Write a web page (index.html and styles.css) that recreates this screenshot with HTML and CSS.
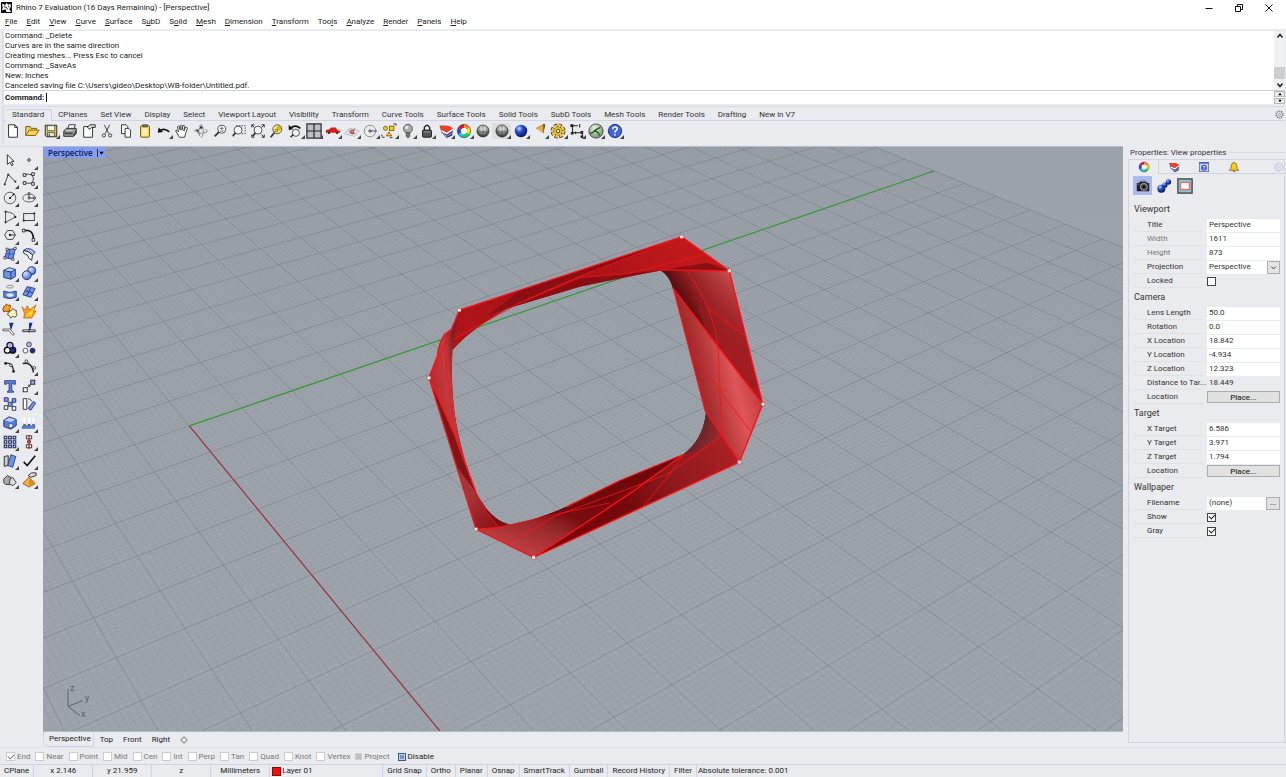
FILE: index.html
```html
<!DOCTYPE html>
<html lang="en">
<head>
<meta charset="utf-8">
<title>Rhino 7 Evaluation (16 Days Remaining) - [Perspective]</title>
<link rel="stylesheet" href="styles.css">
</head>
<body>
<svg class="defs" width="0" height="0" aria-hidden="true">
  <defs>
    <radialGradient id="ballGray" cx=".5" cy=".3" r=".7"><stop offset="0" stop-color="#fff"/><stop offset=".5" stop-color="#999"/><stop offset="1" stop-color="#222"/></radialGradient>
    <radialGradient id="ballBlue" cx=".35" cy=".3" r=".7"><stop offset="0" stop-color="#cfe0ff"/><stop offset=".4" stop-color="#2a50d8"/><stop offset="1" stop-color="#0a1560"/></radialGradient>
    <radialGradient id="ballSoft" cx=".35" cy=".3" r=".7"><stop offset="0" stop-color="#d5e2ff"/><stop offset="1" stop-color="#4a70dc"/></radialGradient>
    <radialGradient id="ballGreen" cx=".4" cy=".3" r=".7"><stop offset="0" stop-color="#e8f5e4"/><stop offset="1" stop-color="#6d9c68"/></radialGradient>
    <symbol id="wheel" viewBox="0 0 18 18">
      <circle cx="9" cy="9" r="5.500" fill="#fff"/>
      <g fill="none" stroke-width="3.800">
        <path d="M9 3.500A5.500 5.500 0 0 1 13.800 6.300" stroke="#ff8a10"/><path d="M13.800 6.300A5.500 5.500 0 0 1 13.800 11.700" stroke="#f5e000"/><path d="M13.800 11.700A5.500 5.500 0 0 1 9 14.500" stroke="#20d040"/><path d="M9 14.500A5.500 5.500 0 0 1 4.200 11.700" stroke="#10c8e8"/><path d="M4.200 11.700A5.500 5.500 0 0 1 4.200 6.300" stroke="#3040e0"/><path d="M4.200 6.300A5.500 5.500 0 0 1 9 3.500" stroke="#e01030"/>
      </g><circle cx="9" cy="9" r="7.500" fill="none" stroke="#333" stroke-width=".7"/>
    </symbol>
    <symbol id="wedge" viewBox="0 0 18 18"><path d="M2 3L4 11L10 17L16 14L17 6L9 3Z" fill="#333c70"/><path d="M2 3L12 3L17 6L10 11L4 8Z" fill="#ef4023"/><path d="M4 8L10 11L17 6V8L10 13L4 10Z" fill="#fff"/><path d="M5 12L10 15L16 11" fill="none" stroke="#aab4dc"/></symbol>
    <symbol id="gear" viewBox="0 0 18 18"><circle cx="9" cy="9" r="7" fill="none" stroke="currentColor" stroke-width="2.500" stroke-dasharray="3 1.400"/><circle cx="9" cy="9" r="5.500" fill="none" stroke="currentColor"/><circle cx="9" cy="9" r="2" fill="none" stroke="currentColor" stroke-width="1.500"/></symbol>
  </defs>
</svg>

<header class="titlebar">
  <svg class="logo" viewBox="0 0 12 12"><rect width="12" height="12" fill="#111"/><path d="M1 3L3 2L4 4L6 1L8 3L10 2L11 5L9 8L11 11H6L5 8L1 9L2 6Z" fill="#fff"/><path d="M3 5L6 6L7 8M8 4L9 6" fill="none" stroke="#111"/></svg>
  <h1>Rhino 7 Evaluation (16 Days Remaining) - [Perspective]</h1>
  <div class="window-buttons">
    <button aria-label="Minimize"><svg viewBox="0 0 10 10"><path d="M1.500 5.500H8.500"/></svg></button>
    <button aria-label="Restore"><svg viewBox="0 0 10 10"><path d="M1.500 3.500H6.500V8.500H1.500ZM3.500 3V1.500H8.500V6.500H7"/></svg></button>
    <button aria-label="Close"><svg viewBox="0 0 10 10"><path d="M1.500 1.500L8.500 8.500M8.500 1.500L1.500 8.500"/></svg></button>
  </div>
</header>
<nav class="menubar">
  <button><u>F</u>ile</button><button><u>E</u>dit</button><button><u>V</u>iew</button><button><u>C</u>urve</button><button><u>S</u>urface</button><button>S<u>u</u>bD</button><button>S<u>o</u>lid</button><button><u>M</u>esh</button><button><u>D</u>imension</button><button><u>T</u>ransform</button><button>Too<u>l</u>s</button><button><u>A</u>nalyze</button><button><u>R</u>ender</button><button><u>P</u>anels</button><button><u>H</u>elp</button>
</nav>

<section class="command">
  <div class="history">
    <div class="log">
      <p>Command: _Delete</p><p>Curves are in the same direction</p><p>Creating meshes... Press Esc to cancel</p><p>Command: _SaveAs</p><p>New: Inches</p><p>Canceled saving file C:\Users\gideo\Desktop\WB-folder\Untitled.pdf.</p>
    </div>
    <div class="scroll">
      <button aria-label="Scroll up"><svg viewBox="0 0 8 8"><path d="M1.500 5.500L4 2.500L6.500 5.500"/></svg></button>
      <span class="thumb"></span>
      <button aria-label="Scroll down"><svg viewBox="0 0 8 8"><path d="M1.500 2.500L4 5.500L6.500 2.500"/></svg></button>
    </div>
  </div>
  <div class="prompt">
    <label for="cmd">Command:</label><span class="caret"></span><input id="cmd" type="text">
    <div class="spin">
      <button aria-label="Previous"><svg viewBox="0 0 8 5"><path d="M2 4L4 1L6 4Z"/></svg></button>
      <button aria-label="Next"><svg viewBox="0 0 8 5"><path d="M2 1L4 4L6 1Z"/></svg></button>
    </div>
  </div>
</section>

<section class="ribbon">
  <div class="ribbon-tabs">
    <button class="on">Standard</button><button>CPlanes</button><button>Set View</button><button>Display</button><button>Select</button><button>Viewport Layout</button><button>Visibility</button><button>Transform</button><button>Curve Tools</button><button>Surface Tools</button><button>Solid Tools</button><button>SubD Tools</button><button>Mesh Tools</button><button>Render Tools</button><button>Drafting</button><button>New in V7</button>
    <button class="gear" aria-label="Toolbar options"><svg><use href="#gear"/></svg></button>
  </div>
  <div class="tools-top">
    <button aria-label="New"><svg viewBox="0 0 18 18"><path d="M4 2H11L14 5V16H4Z" fill="#fff" stroke="#222"/><path d="M11 2V5H14" fill="none" stroke="#222"/></svg></button>
    <button aria-label="Open"><svg viewBox="0 0 18 18"><path d="M2 14V4H7L8 6H14V9" fill="#f7cf55" stroke="#6b5213"/><path d="M2 14L6 8H17L13 14Z" fill="#ffd34d" stroke="#6b5213"/></svg></button>
    <button class="more" aria-label="Save"><svg viewBox="0 0 18 18"><path d="M2.500 2.500H15.500V15.500H4L2.500 14Z" fill="#c9b950" stroke="#222"/><path d="M5 3H13V8.500H5Z" fill="#f6f6f0" stroke="#333" stroke-width=".6"/><path d="M5 11H13V15H5Z" fill="#f0f0f0" stroke="#222" stroke-width=".7"/><path d="M7 12V15" stroke="#222"/></svg></button>
    <button aria-label="Print"><svg viewBox="0 0 18 18"><path d="M6 7L8 2H15L13 8" fill="#fff" stroke="#222"/><path d="M2 9L5 6H16V12L13 15H2Z" fill="#999" stroke="#222"/><path d="M3 10H12M3 12H12M13 14L16 9" stroke="#222"/><path d="M4 9H12" stroke="#fff"/></svg></button>
    <button aria-label="Document properties"><svg viewBox="0 0 18 18"><path d="M3 4H13V16H3Z" fill="#fff" stroke="#222"/><path d="M7 5L10 2H16V5H12L10 7Z" fill="#ddd" stroke="#222"/></svg></button>
    <button aria-label="Cut"><svg viewBox="0 0 18 18"><path d="M6 2L11 12M12 2L7 12" stroke="#333" fill="none"/><circle cx="5.500" cy="14" r="1.800" fill="none" stroke="#333"/><circle cx="12.500" cy="14" r="1.800" fill="none" stroke="#333"/></svg></button>
    <button aria-label="Copy"><svg viewBox="0 0 18 18"><path d="M4 2H9L11 4V12H4Z" fill="#fff" stroke="#222"/><path d="M8 6H12L14 8V16H8Z" fill="#fff" stroke="#222"/></svg></button>
    <button aria-label="Paste"><svg viewBox="0 0 18 18"><rect x="4" y="3" width="10" height="13" rx="1" fill="#f5d95e" stroke="#6b5213"/><rect x="6" y="5" width="6" height="9" fill="#fff3a5"/><rect x="6.500" y="2" width="5" height="2.500" fill="#777" stroke="#222" stroke-width=".6"/></svg></button>
    <button class="more" aria-label="Undo"><svg viewBox="0 0 18 18"><path d="M4 9Q9 5 15 10" fill="none" stroke="#111" stroke-width="2"/><path d="M2 11L3 5L8 10Z" fill="#111"/></svg></button>
    <button aria-label="Pan"><svg viewBox="0 0 18 18"><path d="M6 16L2 9Q2 7 4 9L5 10L4 4Q5 3 6 4L7 8V3Q8 1 9 3V8L10 3Q12 2 12 4L11 9L13 5Q15 4 15 6L13 12L12 16Z" fill="#fff" stroke="#333"/></svg></button>
    <button aria-label="Rotate view"><svg viewBox="0 0 18 18"><ellipse cx="9" cy="9" rx="7" ry="2.500" fill="none" stroke="#777" stroke-dasharray="5 2"/><ellipse cx="9" cy="9" rx="2.500" ry="7" fill="none" stroke="#777" stroke-dasharray="8 2"/><path d="M7 6L9 3L11 6ZM6 10L3 9L6 7Z" fill="#222"/></svg></button>
    <button aria-label="Zoom dynamic"><svg viewBox="0 0 18 18"><circle cx="11" cy="7" r="4.500" fill="#f5f6f8" stroke="#444"/><path d="M8 10L3 15" stroke="#333" stroke-width="2"/><path d="M9 6H13M11 4V8M9 9H13" stroke="#444" stroke-width=".8"/></svg></button>
    <button aria-label="Zoom window"><svg viewBox="0 0 18 18"><path d="M6 3H16V12H12" fill="none" stroke="#333" stroke-dasharray="1.500 1.500"/><circle cx="8" cy="8" r="4.500" fill="#f5f6f8" stroke="#444"/><path d="M5 11L2 15" stroke="#333" stroke-width="2"/></svg></button>
    <button aria-label="Zoom extents"><svg viewBox="0 0 18 18"><circle cx="9" cy="8" r="4.500" fill="#f5f6f8" stroke="#444"/><path d="M6 11L3 15" stroke="#333" stroke-width="2"/><path d="M2 5V2H5M13 2H16V5M16 13V16H13M5 16H2V13M13 5L16 2M13 13L16 16M2 2L5 5" fill="none" stroke="#222"/></svg></button>
    <button aria-label="Zoom selected"><svg viewBox="0 0 18 18"><circle cx="10.500" cy="7" r="5" fill="#f8ea7a" stroke="#444"/><path d="M7 11L3 16" stroke="#333" stroke-width="2"/><circle cx="12" cy="6" r="2" fill="#f2c400" stroke="#7a6200" stroke-width=".5"/><rect x="8" y="7" width="3" height="3" fill="#f2c400" stroke="#7a6200" stroke-width=".5"/></svg></button>
    <button class="more" aria-label="Undo view"><svg viewBox="0 0 18 18"><circle cx="10" cy="11" r="4" fill="#f5f6f8" stroke="#444"/><path d="M7 13L4 16" stroke="#333" stroke-width="1.800"/><path d="M4 6Q9 1 15 6" fill="none" stroke="#111" stroke-width="1.800"/><path d="M2 8V2L7 7Z" fill="#111"/></svg></button>
    <button class="more" aria-label="Four viewports"><svg viewBox="0 0 18 18"><rect x="1" y="1" width="16" height="16" fill="#bcc0c6" stroke="#222" stroke-width="1.300"/><path d="M9 1V17M1 9H17" stroke="#222" stroke-width="1.300"/></svg></button>
    <button class="more" aria-label="Named view"><svg viewBox="0 0 18 18"><path d="M1 8L5 7L7 5H12L14 8L17 9V11H1Z" fill="#e01818"/><circle cx="4.500" cy="11" r="1.500" fill="#333"/><circle cx="13.500" cy="11" r="1.500" fill="#333"/></svg></button>
    <button class="more" aria-label="CPlane"><svg viewBox="0 0 18 18"><path d="M1 12L6 6L17 9L12 15ZM4 8L14 12M8 6.500L5 13M12 7.500L9 14" fill="none" stroke="#aaa" stroke-width=".8"/><path d="M8 11L12 6M8 11L12 12" stroke="#555"/><circle cx="9" cy="10" r="2" fill="none" stroke="#c33"/></svg></button>
    <button class="more" aria-label="Osnap"><svg viewBox="0 0 18 18"><circle cx="9" cy="9" r="6.500" fill="none" stroke="#888"/><path d="M9 9H17" stroke="#444"/><circle cx="9" cy="9" r="1.300" fill="#fff" stroke="#222"/></svg></button>
    <button class="more" aria-label="Select"><svg viewBox="0 0 18 18"><circle cx="5" cy="6" r="2.300" fill="#f7d01a" stroke="#7a6200"/><rect x="9.500" y="3.500" width="5" height="5" fill="#f7d01a" stroke="#7a6200"/><path d="M6 14.500L9 10L12 14.500Z" fill="#f7d01a" stroke="#c04000"/><path d="M14 1H17V3M1 15V13M1 16H4M10 16.500H13" stroke="#222" fill="none"/></svg></button>
    <button class="more" aria-label="Hide"><svg viewBox="0 0 18 18"><circle cx="9" cy="6.500" r="5" fill="#aaa" stroke="#555"/><path d="M7 11H11V15L9 17L7 15Z" fill="#777" stroke="#333" stroke-width=".7"/><circle cx="7.500" cy="5" r="1.800" fill="#eee"/></svg></button>
    <button class="more" aria-label="Lock"><svg viewBox="0 0 18 18"><path d="M6 9V5Q9 0 12 5V9" fill="none" stroke="#222" stroke-width="1.500"/><rect x="4" y="8" width="10" height="8" rx="1" fill="#555" stroke="#111"/><path d="M5 10H13" stroke="#aaa"/></svg></button>
    <button class="more" aria-label="Layers"><svg viewBox="0 0 18 18"><use href="#wedge"/></svg></button>
    <button class="more" aria-label="Properties"><svg viewBox="0 0 18 18"><use href="#wheel"/></svg></button>
    <button aria-label="Shade"><svg viewBox="0 0 18 18"><circle cx="9" cy="9" r="6.800" fill="url(#ballGray)" stroke="#222" stroke-width=".7"/><path d="M9 3V15M3 10H15" stroke="#333" stroke-width=".6"/></svg></button>
    <button class="more pressed" aria-label="Shaded view"><svg viewBox="0 0 18 18"><circle cx="9" cy="9" r="6.800" fill="url(#ballGray)" stroke="#222" stroke-width=".7"/><path d="M9 3V15M3 10H15" stroke="#333" stroke-width=".6"/></svg></button>
    <button class="more" aria-label="Render"><svg viewBox="0 0 18 18"><circle cx="9" cy="9" r="7" fill="url(#ballBlue)"/></svg></button>
    <button class="more" aria-label="Spotlight"><svg viewBox="0 0 18 18"><path d="M6 6L15 1L14 11Z" fill="#f6a633" stroke="#8a5a10" stroke-width=".6"/><path d="M14 1L16 2L14 11Z" fill="#444"/><path d="M6 6L9 7L14 11Z" fill="#ffe9a8"/></svg></button>
    <button class="more" aria-label="Options"><svg viewBox="0 0 18 18"><circle cx="9" cy="9" r="5" fill="#f0c23a" stroke="#4a3800" stroke-width=".7"/><circle cx="9" cy="9" r="6.500" fill="none" stroke="#4a3800" stroke-width="3.800" stroke-dasharray="3.500 1.600"/><circle cx="9" cy="9" r="6" fill="none" stroke="#f7cf4a" stroke-width="3" stroke-dasharray="2.600 2.110"/><circle cx="9" cy="9" r="2" fill="#fff" stroke="#4a3800"/></svg></button>
    <button class="more" aria-label="Dimension"><svg viewBox="0 0 18 18"><path d="M4 3H10M4 3V11H15V15M12 1V5" fill="none" stroke="#222" stroke-width="1.200"/><path d="M1.500 1.500H5V4.500H1.500ZM2 10H5V13H2ZM13 14H16V17H13ZM13 9H16V12H13ZM6 11L8 9V13Z" fill="#222"/></svg></button>
    <button class="more" aria-label="Grasshopper"><svg viewBox="0 0 18 18"><circle cx="9" cy="9" r="8" fill="url(#ballGreen)" stroke="#333" stroke-width=".9"/><path d="M2 12Q6 11 8 8L14 5M7 9Q11 9 13 14" stroke="#30502c" fill="none" stroke-width="1.500"/></svg></button>
    <button class="more" aria-label="Help"><svg viewBox="0 0 18 18"><circle cx="9" cy="9" r="7.500" fill="#3f62dd" stroke="#1c2d80"/><path d="M6.500 7Q6.500 4.500 9 4.500Q11.500 4.500 11.500 6.800Q11.500 8 9 9.500V11M9 12.500V14" fill="none" stroke="#fff" stroke-width="1.700"/></svg></button>
  </div>
</section>

<main class="work">
  <aside class="tools-side">
    <button aria-label="Pointer"><svg viewBox="0 0 18 18"><path d="M6 3V14L9 11.500L11 15.500L12.500 14.500L10.500 10.500H13.500Z" fill="#fff" stroke="#222"/></svg></button>
    <button class="more" aria-label="Point"><svg viewBox="0 0 18 18"><circle cx="9" cy="9" r="1.500" fill="#fff" stroke="#222"/></svg></button>
    <button class="more" aria-label="Polyline"><svg viewBox="0 0 18 18"><path d="M3 15L7 4L15 12" fill="none" stroke="#333"/><path d="M2 14H4V16H2ZM6 3H8V5H6ZM14 11H16V13H14Z" fill="#222"/></svg></button>
    <button class="more" aria-label="Curve"><svg viewBox="0 0 18 18"><path d="M4 4Q14 2 14 9Q14 16 4 13" fill="none" stroke="#333"/><path d="M2.500 3H5.500V6H2.500ZM12 2H15V5H12ZM2.500 12H5.500V15H2.500ZM12 13H15V16H12Z" fill="#fff" stroke="#222"/></svg></button>
    <button class="more" aria-label="Circle"><svg viewBox="0 0 18 18"><circle cx="9" cy="9" r="6.500" fill="none" stroke="#555"/><path d="M9 9L13 5" stroke="#333"/><path d="M8 8H10V10H8ZM12 4H14V6H12Z" fill="#222"/></svg></button>
    <button class="more" aria-label="Ellipse"><svg viewBox="0 0 18 18"><ellipse cx="9" cy="9" rx="7" ry="4.500" fill="none" stroke="#555"/><path d="M9 9V4M9 9H15" stroke="#333"/><path d="M8 3H10V5H8ZM8 8H10V10H8ZM14 8H16V10H14Z" fill="#fff" stroke="#222" stroke-width=".8"/></svg></button>
    <button class="more" aria-label="Arc"><svg viewBox="0 0 18 18"><path d="M4 3Q14 4 15 9L4 15Z" fill="none" stroke="#444"/><path d="M3 2H5V4H3ZM14 8H16V10H14ZM3 14H5V16H3Z" fill="#222"/></svg></button>
    <button class="more" aria-label="Rectangle"><svg viewBox="0 0 18 18"><rect x="3" y="5" width="12" height="8" fill="none" stroke="#333"/><path d="M14 4H16V6H14ZM2 12H4V14H2Z" fill="#222"/></svg></button>
    <button class="more" aria-label="Polygon"><svg viewBox="0 0 18 18"><path d="M6 4H12L15 9L12 14H6L3 9Z" fill="none" stroke="#333"/><path d="M9 9H15" stroke="#333"/><circle cx="9" cy="9" r="1.300" fill="#222"/></svg></button>
    <button class="more" aria-label="Fillet"><svg viewBox="0 0 18 18"><path d="M3 4H8Q14 5 14 14" fill="none" stroke="#111" stroke-width="1.800"/><path d="M1.500 2.500H4.500V5.500H1.500ZM12.500 13H15.500V16H12.500Z" fill="#fff" stroke="#222"/></svg></button>
    <button class="more" aria-label="Surface from points"><svg viewBox="0 0 18 18"><path d="M6 4L15 3L12 15L3 13Z" fill="#6f92e8" stroke="#223a80"/><path d="M9 4L7 14M5 9L14 9" stroke="#223a80" stroke-width=".7"/><path d="M4.500 2.500H7V5H4.500ZM13.500 1.500H16V4H13.500ZM2 12H4.500V14.500H2ZM11 13.500H13.500V16H11Z" fill="#fff" stroke="#222" stroke-width=".8"/></svg></button>
    <button class="more" aria-label="Surface sweep"><svg viewBox="0 0 18 18"><path d="M3 5L6 3Q12 2 16 7L13 10Q9 6 3 5Z" fill="#a9bdf4" stroke="#223a80"/><path d="M3 5Q9 6 13 10L12 16L9 14Q9 10 3 8Z" fill="#fff" stroke="#222"/></svg></button>
    <button class="more" aria-label="Box"><svg viewBox="0 0 18 18"><path d="M2 6L8 3L15 5V13L10 16L2 14Z" fill="#6f92e8" stroke="#1d2f6d"/><path d="M2 6L10 8L15 5M10 8V16" fill="none" stroke="#1d2f6d"/><path d="M3 6L8 4L14 5L10 7Z" fill="#c5d4fa"/></svg></button>
    <button class="more" aria-label="Boolean union"><svg viewBox="0 0 18 18"><circle cx="12" cy="6.500" r="4.500" fill="url(#ballSoft)" stroke="#1d2f6d"/><circle cx="6.500" cy="11.500" r="5" fill="url(#ballSoft)" stroke="#1d2f6d"/></svg></button>
    <button class="more" aria-label="Project to surface"><svg viewBox="0 0 18 18"><ellipse cx="9" cy="3" rx="4" ry="1.600" fill="none" stroke="#888"/><path d="M2 8Q9 11 16 8V15Q9 18 2 15Z" fill="#5c84e6" stroke="#223a80"/><ellipse cx="9" cy="12.500" rx="4" ry="2" fill="#e3ebff"/></svg></button>
    <button class="more" aria-label="Mesh"><svg viewBox="0 0 18 18"><path d="M7 3L16 5L11 15L2 12Z" fill="#6f92e8" stroke="#223a80"/><path d="M4.500 7.500L13.500 10M11 4L6.500 13.500" stroke="#223a80"/></svg></button>
    <button aria-label="Join"><svg viewBox="0 0 18 18"><path d="M2 4L4 3L5 1L7 3L9 2L10 5L8 7L9 9L6 10L4 9L2 10L1 7Z" fill="#ffa21a" stroke="#6b4200"/><path d="M9 9L11 8L12 6L14 8L16 8V11L17 13L15 16L12 15L10 17L8 14L6 13Z" fill="#fff3b8" stroke="#444"/></svg></button>
    <button aria-label="Explode"><svg viewBox="0 0 18 18"><path d="M1 4L5 8L7 3L10 8L17 2L14 9L17 9L12 17L3 17L4 12Z" fill="#ff9c12" stroke="#a85a00" stroke-width=".7"/><path d="M5 16L8 11L15 5L12 14Z" fill="#ffd23c"/></svg></button>
    <button aria-label="Trim"><svg viewBox="0 0 18 18"><path d="M8 2H13L10 11Z" fill="#16329c"/><path d="M1 9H9L14 15L12 16L8 11H1Z" fill="#fff" stroke="#333" stroke-width=".8"/></svg></button>
    <button aria-label="Split"><svg viewBox="0 0 18 18"><path d="M9 2H13L10 11H9Z" fill="#16329c"/><path d="M2 10H16V12H2Z" fill="#fff" stroke="#222"/><path d="M9 9V13" stroke="#222"/></svg></button>
    <button class="more" aria-label="Group"><svg viewBox="0 0 18 18"><g stroke="#111" stroke-width="2.200"><circle cx="9" cy="6" r="3"/><circle cx="6" cy="11.500" r="3"/><circle cx="12" cy="11.500" r="3"/></g><circle cx="9" cy="6" r="2.700" fill="#aeb8f4"/><circle cx="6" cy="11.500" r="2.500" fill="#fff"/><circle cx="12" cy="11.500" r="2.500" fill="#1c2a9c"/></svg></button>
    <button aria-label="Ungroup"><svg viewBox="0 0 18 18"><circle cx="9" cy="5" r="2.700" fill="#aeb8f4" stroke="#444"/><circle cx="5" cy="12" r="2.700" fill="#fff" stroke="#444"/><circle cx="13" cy="12" r="2.700" fill="#1c2a9c" stroke="#222"/></svg></button>
    <button aria-label="Edit points"><svg viewBox="0 0 18 18"><path d="M3 5Q12 3 13 14" fill="none" stroke="#222" stroke-width="1.400"/><circle cx="4" cy="5" r="1.500" fill="#222"/><circle cx="10" cy="7" r="1.500" fill="#fff" stroke="#222"/><circle cx="13" cy="14" r="1.500" fill="#222"/></svg></button>
    <button class="more" aria-label="Control points"><svg viewBox="0 0 18 18"><path d="M2 5Q12 3 14 15" fill="none" stroke="#222" stroke-width="1.600"/><path d="M6 2L15 10" stroke="#777"/><circle cx="6" cy="2.500" r="1.500" fill="#fff" stroke="#333"/><circle cx="15" cy="10" r="1.500" fill="#fff" stroke="#333"/></svg></button>
    <button aria-label="Text"><svg viewBox="0 0 18 18"><path d="M3 3H15V7H13L12 6H11V14L13 15V16H6V15L8 14V6H6L5 7H3Z" fill="#5c84ea" stroke="#1d2f6d" stroke-width=".9"/></svg></button>
    <button class="more" aria-label="Move"><svg viewBox="0 0 18 18"><rect x="2.500" y="11" width="4.500" height="4.500" fill="#fff" stroke="#222"/><rect x="11" y="2.500" width="4.500" height="4.500" fill="#8faaf0" stroke="#222"/><path d="M7 11L11 7M8 8H10V10" stroke="#222" fill="none"/></svg></button>
    <button aria-label="Copy objects"><svg viewBox="0 0 18 18"><path d="M2.500 11H6.500V15H2.500ZM11.500 12H15.500V16H11.500Z" fill="#fff" stroke="#222"/><path d="M7 7H11.500V11.500H7ZM11.500 3H15.500V7H11.500ZM2.500 2H7V6H2.500Z" fill="#7e9cf0" stroke="#1d2f6d"/></svg></button>
    <button aria-label="Rotate"><svg viewBox="0 0 18 18"><path d="M2.500 3H6.500V15H2.500Z" fill="#fff" stroke="#222"/><path d="M8 14L14 6L16.500 8L11 16Z" fill="#6f92e8" stroke="#223a80"/><path d="M8 3Q11 3 12 6" fill="none" stroke="#222"/></svg></button>
    <button class="more" aria-label="Cage"><svg viewBox="0 0 18 18"><path d="M2 6L8 2L16 5V12L10 16L2 13Z" fill="#4e7de6" stroke="#1d2f6d"/><path d="M3 6L8 3L15 5L10 8Z" fill="#c5d4fa"/><path d="M8 10H12V14H8Z" fill="#fff" stroke="#1d2f6d" stroke-width=".6"/></svg></button>
    <button class="more" aria-label="Flow"><svg viewBox="0 0 18 18"><path d="M4 3V11M9 3V11M14 3V11" stroke="#fff" stroke-width="2"/><path d="M3 10L4 12L5 10M8 10L9 12L10 10M13 10L14 12L15 10" stroke="#222" fill="none"/><path d="M2 12H16L15 15H1Z" fill="#5c84e6" stroke="#223a80" stroke-width=".6"/></svg></button>
    <button class="more" aria-label="Array"><svg viewBox="0 0 18 18"><path d="M2.500 2.500H5.500V5.500H2.500ZM7.500 2.500H10.500V5.500H7.500ZM12.500 2.500H15.500V5.500H12.500ZM2.500 7.500H5.500V10.500H2.500ZM7.500 7.500H10.500V10.500H7.500ZM12.500 7.500H15.500V10.500H12.500ZM7.500 12.500H10.500V15.500H7.500ZM12.500 12.500H15.500V15.500H12.500ZM2.500 12.500H5.500V15.500H2.500Z" fill="#e6ecff" stroke="#1c2a5c" stroke-width="1.200"/></svg></button>
    <button class="more" aria-label="Align"><svg viewBox="0 0 18 18"><path d="M6 2H12V5.500H6ZM7.500 7.500H10.500V10H7.500ZM6 12H12V15.500H6Z" fill="#fff" stroke="#222"/><path d="M9 1V17" stroke="#e01818" stroke-width="1.500"/></svg></button>
    <button class="more" aria-label="Shear"><svg viewBox="0 0 18 18"><path d="M2.500 4L7 3V14L2.500 15Z" fill="#ccc" stroke="#222"/><path d="M10 2L15.500 4L12 16L6.500 14Z" fill="#6f92e8" stroke="#223a80"/></svg></button>
    <button class="more" aria-label="Check"><svg viewBox="0 0 18 18"><path d="M3 10L7 14L16 3" fill="none" stroke="#111" stroke-width="1.800"/></svg></button>
    <button class="more" aria-label="Analyze"><svg viewBox="0 0 18 18"><path d="M2 8L6 4L10 6V14H4L2 12Z" fill="#aaa" stroke="#333"/><path d="M9 8L12 6L16 12L13 15L8 14Z" fill="#ddd" stroke="#333"/></svg></button>
    <button class="more" aria-label="Drag"><svg viewBox="0 0 18 18"><path d="M2 13L9 6L16 13L9 17Z" fill="#f7b233" stroke="#6b4200" stroke-width=".8"/><path d="M9 6V17L16 13Z" fill="#d98d1c"/><path d="M8 4L12 1H17V4L11 6Z" fill="#ddd" stroke="#222"/></svg></button>
  </aside>

  <div class="stage">
    <section class="viewport">
      <svg class="scene" viewBox="43 147 1080 585" preserveAspectRatio="xMidYMid slice" role="img" aria-label="Perspective scene">
        <defs>
          <linearGradient id="gTop" gradientUnits="userSpaceOnUse" x1="118" y1="300" x2="800" y2="100"><stop offset="0" stop-color="#b01418"/><stop offset=".45" stop-color="#a01216"/><stop offset="1" stop-color="#c0191c"/></linearGradient>
          <linearGradient id="gRightA" gradientUnits="userSpaceOnUse" x1="780" y1="260" x2="930" y2="170"><stop offset="0" stop-color="#4a080a"/><stop offset=".35" stop-color="#8a1c1f"/><stop offset="1" stop-color="#c94a4c"/></linearGradient>
          <linearGradient id="gRightFade" gradientUnits="userSpaceOnUse" x1="900" y1="170" x2="940" y2="400"><stop offset="0" stop-color="#a01e22" stop-opacity="0"/><stop offset="1" stop-color="#a01e22"/></linearGradient>
          <linearGradient id="gRightB" gradientUnits="userSpaceOnUse" x1="800" y1="500" x2="1000" y2="450"><stop offset="0" stop-color="#981b1e"/><stop offset=".3" stop-color="#ad3032"/><stop offset=".7" stop-color="#e05658"/><stop offset="1" stop-color="#c23c3f"/></linearGradient>
          <linearGradient id="gBottomR" gradientUnits="userSpaceOnUse" x1="930" y1="700" x2="620" y2="850"><stop offset="0" stop-color="#a91f23"/><stop offset=".55" stop-color="#8e1a1d"/><stop offset="1" stop-color="#76080c"/></linearGradient>
          <linearGradient id="gInner" gradientUnits="userSpaceOnUse" x1="820" y1="640" x2="900" y2="680"><stop offset="0" stop-color="#5e2325"/><stop offset="1" stop-color="#a52c2f"/></linearGradient>
          <linearGradient id="gBottomL" gradientUnits="userSpaceOnUse" x1="400" y1="870" x2="350" y2="1000"><stop offset="0" stop-color="#780b0f"/><stop offset=".4" stop-color="#98282a"/><stop offset="1" stop-color="#b93c3e"/></linearGradient>
          <linearGradient id="gLeft" gradientUnits="userSpaceOnUse" x1="40" y1="480" x2="115" y2="470"><stop offset="0" stop-color="#bd2c2f"/><stop offset=".6" stop-color="#c23c3e"/><stop offset="1" stop-color="#7c2022"/></linearGradient>
          <linearGradient id="gCorner" gradientUnits="userSpaceOnUse" x1="150" y1="830" x2="230" y2="900"><stop offset="0" stop-color="#a83436"/><stop offset="1" stop-color="#8c1519"/></linearGradient>
          <linearGradient id="gBack" x1="0" y1="0" x2="0" y2="1"><stop offset="0" stop-color="#9ba1a9"/><stop offset="1" stop-color="#9ea5ad"/></linearGradient>
        </defs>
        <rect x="-957" y="-353" width="3080" height="1585" fill="url(#gBack)"/>
        <path id="grid-minor" fill="none" stroke="#868d96" stroke-opacity=".28" stroke-width=".7"/>
        <path id="grid-major" fill="none" stroke="#6c747c" stroke-opacity=".55" stroke-width=".8"/>
        <path id="axis-x" fill="none" stroke="#a03038" stroke-width="1.200"/>
        <path id="axis-y" fill="none" stroke="#369a36" stroke-width="1.200"/>
        <g transform="translate(420 220) scale(.33333)" stroke-linejoin="round">
          <path fill="#7a1013" fill-rule="evenodd" d="M785 52L928 154L1028 554L958 728L341 1014L168 929L27 475L52 410Q58 350 94 330L118 272ZM722 153Q560 178 480 200L262 267Q150 330 97 392Q92 500 105 590Q130 740 168 820Q210 900 270 916Q340 905 440 862L600 783L790 705Q850 660 858 580L760 205Q750 165 722 153Z"/>
          <path fill="url(#gTop)" d="M118 272L785 52L928 154H722Q600 172 480 200L262 267Q150 330 97 392L106 320Z"/>
          <path fill="#8b0e12" d="M300 214L785 52L480 170L320 240L200 290Z"/>
          <path fill="#8b0e12" d="M262 267L480 174L600 165L722 152L480 202Z"/>
          <path fill="#8c1013" d="M722 153L860 130L928 154Z"/>
          <path fill="url(#gRightA)" d="M722 153L928 154L1028 554L758 205Q748 168 722 153Z"/>
          <path fill="url(#gRightFade)" d="M800 153L928 154L1028 554L855 330Z"/>
          <path fill="url(#gRightB)" d="M760 205L1028 554L958 728L856 575Z"/>
          <path fill="url(#gBottomR)" d="M858 580L958 728L341 1014L610 830L790 705Q850 660 858 580Z"/>
          <path fill="url(#gInner)" d="M858 580L905 650L850 690L790 705Q850 660 858 580Z"/>
          <path fill="url(#gBottomL)" d="M168 929L270 916Q400 890 570 850L640 815L341 1014Z"/>
          <path fill="#6e090c" d="M270 916Q340 905 440 862L600 783L790 705L740 740L570 850L410 886L300 908Z"/>
          <path fill="url(#gLeft)" d="M27 475L52 410Q58 350 94 330L118 272L97 392Q92 500 105 590Q120 680 150 770L100 660Z"/>
          <path fill="#7e1619" d="M27 475L105 650L168 820L200 870L150 850L108 730Z"/>
          <path fill="url(#gCorner)" d="M110 740L168 820Q205 890 240 924L168 929Z"/>
          <path fill="none" stroke="#f31518" stroke-width="2.500" d="M100 360L300 250L480 174L620 163L850 106M785 52L480 170L320 240M800 153Q890 280 895 400L905 650M860 262L978 352M815 400L905 520L992 636M905 650L740 765L410 888L262 970M670 860L745 770L790 705M570 850L390 888L240 924M72 370Q88 520 105 650L168 820Q200 885 235 922M52 410Q60 360 75 340M118 272Q90 350 27 475"/>
          <path fill="none" stroke="#fa1114" stroke-width="4" d="M118 272L785 52L928 154L1028 554L958 728L341 1014L168 929L27 475L52 410Q58 350 94 330L118 272M928 154L722 151M758 205L1028 554M760 205L856 575L958 728M341 1014L640 815L790 705L600 783L440 862M168 929L240 924M27 475L105 650L168 820"/>
          <path fill="#fff" stroke="#c53030" stroke-width="1.500" d="M780 47h10v10h-10ZM923 149h10v10h-10ZM1024 549h10v10h-10ZM953 723h10v10h-10ZM336 1009h10v10h-10ZM163 924h10v10h-10ZM22 470h10v10h-10ZM113 267h10v10h-10Z"/>
        </g>
        <g class="triad">
          <path d="M68 690V707L83 701M68 707L80 716"/>
          <text x="70" y="691">z</text><text x="85" y="701">y</text><text x="81" y="717">x</text>
        </g>
      </svg>
      <button class="view-label"><span>Perspective</span><svg viewBox="0 0 8 8"><path d="M1.500 2.500H6.500L4 6Z"/></svg></button>
    </section>
    <nav class="view-tabs">
      <button class="on">Perspective</button><button>Top</button><button>Front</button><button>Right</button>
      <button aria-label="New viewport"><svg viewBox="0 0 8 8"><path d="M3 3V1H5V3H7V5H5V7H3V5H1V3Z" fill="#fff" stroke="#777" stroke-width=".8"/></svg></button>
    </nav>
  </div>

  <aside class="panel">
    <h2>Properties: View properties</h2>
    <div class="panel-tabs">
      <button class="on" aria-label="Properties"><svg><use href="#wheel"/></svg></button>
      <button aria-label="Layers"><svg><use href="#wedge"/></svg></button>
      <button aria-label="Help"><svg viewBox="0 0 18 18"><rect x="2" y="2" width="14" height="14" fill="#c9d4f6" stroke="#556"/><path d="M2 3H16" stroke="#345bc4" stroke-width="2"/><circle cx="9" cy="10" r="4.500" fill="#3c5fd8"/><path d="M7.500 9Q9 6 10.500 9L9 11V13" fill="none" stroke="#fff" stroke-width="1.200"/></svg></button>
      <button aria-label="Notifications"><svg viewBox="0 0 18 18"><path d="M2 14Q5 12 5 7Q5 3 9 2Q13 3 13 7Q13 12 16 14Z" fill="#ffce12" stroke="#5a4700"/><path d="M7 15H11L9 17Z" fill="#5a4700"/></svg></button>
      <button class="gear" aria-label="Panel options"><svg><use href="#gear"/></svg></button>
    </div>
    <form class="panel-body">
      <div class="modes">
        <button type="button" class="on" aria-label="Camera"><svg viewBox="0 0 18 18"><path d="M2 6L5 5L7 3H12L13 5L16 6V15H2Z" fill="#222"/><circle cx="10" cy="10" r="4" fill="#555" stroke="#bbb" stroke-width=".8"/><circle cx="10" cy="10" r="1.800" fill="#111"/><path d="M7 4H12M3 7H5" stroke="#999"/></svg></button>
        <button type="button" aria-label="Material"><svg viewBox="0 0 18 18"><circle cx="14" cy="4.500" r="3" fill="url(#ballBlue)"/><circle cx="10" cy="8" r="3" fill="url(#ballBlue)"/><circle cx="6" cy="12" r="4.500" fill="url(#ballBlue)"/></svg></button>
        <button type="button" aria-label="Frame"><svg viewBox="0 0 18 18"><rect x="1" y="1" width="16" height="16" fill="#86c4d6" stroke="#444" stroke-width="1.500"/><rect x="4" y="5" width="10" height="8" fill="#fff" stroke="#ee6a62" stroke-width="1.500"/></svg></button>
      </div>
      <h3>Viewport</h3>
      <div class="row"><label for="f1">Title</label><input id="f1" type="text" value="Perspective"></div>
      <div class="row dim"><label for="f2">Width</label><input id="f2" type="text" value="1611"></div>
      <div class="row dim"><label for="f3">Height</label><input id="f3" type="text" value="873"></div>
      <div class="row"><label for="f4">Projection</label><div class="combo"><select id="f4"><option>Perspective</option><option>Parallel</option></select><svg viewBox="0 0 12 12"><path d="M3.500 5L6 7.500L8.500 5"/></svg></div></div>
      <div class="row"><label for="f5">Locked</label><input id="f5" type="checkbox"></div>
      <h3>Camera</h3>
      <div class="row"><label for="c1">Lens Length</label><input id="c1" type="text" value="50.0"></div>
      <div class="row"><label for="c2">Rotation</label><input id="c2" type="text" value="0.0"></div>
      <div class="row"><label for="c3">X Location</label><input id="c3" type="text" value="18.842"></div>
      <div class="row"><label for="c4">Y Location</label><input id="c4" type="text" value="-4.934"></div>
      <div class="row"><label for="c5">Z Location</label><input id="c5" type="text" value="12.323"></div>
      <div class="row"><label for="c6">Distance to Tar...</label><output id="c6">18.449</output></div>
      <div class="row"><label for="c7">Location</label><button id="c7" class="place" type="button">Place...</button></div>
      <h3>Target</h3>
      <div class="row"><label for="t1">X Target</label><input id="t1" type="text" value="6.586"></div>
      <div class="row"><label for="t2">Y Target</label><input id="t2" type="text" value="3.971"></div>
      <div class="row"><label for="t3">Z Target</label><input id="t3" type="text" value="1.794"></div>
      <div class="row"><label for="t4">Location</label><button id="t4" class="place" type="button">Place...</button></div>
      <h3>Wallpaper</h3>
      <div class="row"><label for="w1">Filename</label><div class="file"><input id="w1" type="text" value="(none)"><button type="button">...</button></div></div>
      <div class="row"><label for="w2">Show</label><input id="w2" type="checkbox" checked></div>
      <div class="row"><label for="w3">Gray</label><input id="w3" type="checkbox" checked></div>
    </form>
  </aside>
</main>

<section class="osnap">
  <label><input type="checkbox" checked>End</label><label><input type="checkbox">Near</label><label><input type="checkbox">Point</label><label><input type="checkbox">Mid</label><label><input type="checkbox">Cen</label><label><input type="checkbox">Int</label><label><input type="checkbox">Perp</label><label><input type="checkbox">Tan</label><label><input type="checkbox">Quad</label><label><input type="checkbox">Knot</label><label><input type="checkbox">Vertex</label><label class="filled"><input type="checkbox">Project</label><label class="disable"><input type="checkbox">Disable</label>
</section>
<footer class="status">
  <button class="w-cplane">CPlane</button><span class="coord">x 2.146</span><span class="coord">y 21.959</span><span class="coord">z</span><span class="coord">Millimeters</span><button class="layer"><i></i>Layer 01</button><button>Grid Snap</button><button>Ortho</button><button>Planar</button><button>Osnap</button><button>SmartTrack</button><button>Gumball</button><button>Record History</button><button>Filter</button><span class="tolerance">Absolute tolerance: 0.001</span>
</footer>
<script src="grid.js"></script>
</body>
</html>
```

FILE: grid.js
```js
// Projects the construction-plane grid with a 50 mm lens camera.
const camera = [18.842, -4.934, 12.323];
const target = [6.586, 3.971, 1.794];
const center = [583, 439.5];
const focal = 292.5 / 0.24;
const extent = 20;

const sub = (a, b) => a.map((v, i) => v - b[i]);
const dot = (a, b) => a.reduce((s, v, i) => s + v * b[i], 0);
const cross = (a, b) => [a[1] * b[2] - a[2] * b[1], a[2] * b[0] - a[0] * b[2], a[0] * b[1] - a[1] * b[0]];
const unit = (a) => a.map((v) => v / Math.hypot(...a));

const forward = unit(sub(target, camera));
const right = unit(cross(forward, [0, 0, 1]));
const up = cross(right, forward);

function toScreen(p) {
  const v = sub(p, camera);
  const d = dot(v, forward);
  return (center[0] + focal * dot(v, right) / d).toFixed(1) + " " + (center[1] - focal * dot(v, up) / d).toFixed(1);
}

function line(a, b) {
  const near = 2;
  const da = dot(sub(a, camera), forward);
  const db = dot(sub(b, camera), forward);
  if (da < near && db < near) return "";
  const cut = a.map((v, i) => v + (b[i] - v) * (near - da) / (db - da));
  return "M" + toScreen(da < near ? cut : a) + "L" + toScreen(db < near ? cut : b);
}

let minor = "";
let major = "";
for (let i = -extent * 10; i <= extent * 10; i++) {
  const t = i / 10;
  const pair = line([t, -extent, 0], [t, extent, 0]) + line([-extent, t, 0], [extent, t, 0]);
  if (i % 10 === 0) major += pair;
  else minor += pair;
}
document.getElementById("grid-minor").setAttribute("d", minor);
document.getElementById("grid-major").setAttribute("d", major);
document.getElementById("axis-x").setAttribute("d", line([0, 0, 0], [extent, 0, 0]));
document.getElementById("axis-y").setAttribute("d", line([0, 0, 0], [0, extent, 0]));
```

FILE: styles.css
```css
* { box-sizing: border-box; }
body {
  margin: 0;
  height: 100vh;
  display: flex;
  flex-direction: column;
  overflow: hidden;
  background: #eaebef;
  color: #222;
  font: 8px/10px Roboto, "Open Sans", sans-serif;
}
button, input, select { font: inherit; color: inherit; }
button { border: 0; padding: 0; background: none; white-space: nowrap; }
h1, h2, h3, p { margin: 0; font-weight: 400; font-size: 8px; }
.defs { position: absolute; }

.titlebar { display: flex; align-items: center; height: 15px; padding-left: 1px; background: #fff; }
.logo { width: 11px; height: 11px; margin-right: 4px; }
.window-buttons { display: flex; margin-left: auto; gap: 20px; padding-right: 12px; }
.window-buttons button { width: 10px; height: 10px; }
.window-buttons svg { display: block; fill: none; stroke: #111; }

.menubar { display: flex; gap: 9px; height: 14px; padding-left: 5px; align-items: center; background: #fff; }
.menubar u { text-underline-offset: 1px; }

.command { margin: 2px 1px 0 2px; border-left: 2px solid #dcdfea; background: #fff; }
.history { display: flex; height: 60px; border-bottom: 1px solid #ccd2da; }
.log { flex: 1; padding-left: 1px; line-height: 10px; }
.scroll { width: 11px; display: flex; flex-direction: column; background: #f0f0f0; }
.scroll button { height: 10px; display: grid; place-items: center; }
.scroll svg { width: 8px; height: 8px; fill: none; stroke: #222; stroke-width: 1.5; }
.thumb { height: 12px; margin: auto 0 1px; background: #cdcdcd; }
.prompt { display: flex; align-items: center; height: 13px; padding-left: 1px; }
.prompt label { font-weight: 700; }
.caret { width: 1px; height: 9px; margin-left: 2px; background: #111; }
.prompt input { flex: 1; border: 0; outline: 0; padding: 0; height: 12px; background: none; }
.spin { width: 11px; display: flex; flex-direction: column; gap: 1px; }
.spin button { height: 6px; background: #e8e8e8; border: 1px solid #bbb; display: grid; place-items: center; }
.spin svg { width: 8px; height: 4px; }

.ribbon { margin: 2px 1px 0 2px; border-top: 1px solid #d5d9e4; border-left: 2px solid #dcdfea; padding-top: 2px; height: 38px; }
.ribbon-tabs { display: flex; height: 12px; padding-left: 2px; border-bottom: 1px solid #cfd3e4; }
.ribbon-tabs button { padding: 0 7px 0 6px; color: #333; }
.ribbon-tabs .on { height: 12px; background: #eaebef; border: 1px solid #cfd3e4; border-width: 1px 1px 0 0; border-radius: 3px 3px 0 0; padding: 0 7px 1px 6px; }
.ribbon-tabs .gear { margin-left: auto; padding: 0 1px; color: #888; }
.gear svg { display: block; width: 9px; height: 9px; }
.tools-top { display: grid; grid-template-columns: repeat(33, 1fr); width: 620px; height: 20px; align-items: center; }
.tools-top button, .tools-side button { position: relative; display: grid; place-items: center; }
.tools-top svg, .tools-side svg { width: 16px; height: 16px; }
.more::after {
  content: "";
  position: absolute;
  right: 0;
  bottom: 0;
  border: 2px solid transparent;
  border-right-color: #444;
  border-bottom-color: #444;
}
.pressed { background: #dcdde1; }

.work { flex: 1; display: flex; min-height: 0; margin-top: 2px; }
.tools-side { width: 43px; height: 343px; padding: 4px 5px 0 0; display: grid; grid-template: repeat(18, 1fr) / 1fr 1fr; border-top: 1px solid #d5d9e4; flex: none; }
.stage { flex: 1; min-width: 0; display: flex; flex-direction: column; }
.viewport { flex: 1; min-height: 0; position: relative; border: 1px solid #b5bac8; border-width: 1px 0; }
.scene { display: block; width: 100%; height: 100%; }
.triad path { fill: none; stroke: #5c6268; stroke-width: 1; }
.triad text { font: 9px Roboto, sans-serif; fill: #5c6268; }
.view-label { position: absolute; left: 1px; top: 0; height: 11px; display: flex; align-items: center; padding-left: 4px; background: #829df2; color: #111c50; font: 600 8px/10px "Open Sans", sans-serif; }
.view-label svg { width: 8px; height: 8px; margin-left: 4px; border-left: 1px solid #333; }
.view-tabs { display: flex; height: 15px; }
.view-tabs button { padding: 0 5px; height: 15px; }
.view-tabs svg { display: block; width: 8px; height: 8px; }
.view-tabs .on { padding: 0 2px 0 5px; border: 1px solid #cfd3e4; border-top: 0; border-radius: 0 0 2px 6px; margin-right: 1px; }

.panel { width: 163px; padding: 0 1px 4px 5px; display: flex; flex-direction: column; flex: none; }
.panel h2 { height: 13px; line-height: 13px; padding-left: 2px; display: flex; align-items: center; gap: 3px; color: #333; }
.panel h2::after { content: ""; flex: 1; height: 1px; background: #d5d9e6; }
.panel-tabs { display: flex; height: 15px; border: 1px solid #cfd3e4; }
.panel-tabs button { width: 30px; display: grid; place-items: center; }
.panel-tabs button + button { border-left: 0; }
.panel-tabs .on { border-right: 1px solid #cfd3e4; background: #eaebef; height: 14px; }
.panel-tabs svg { width: 12px; height: 12px; }
.panel-tabs .gear { margin-left: auto; width: 10px; color: #c3cae0; }
.panel-tabs .gear svg { width: 10px; height: 10px; }
.panel-body { flex: 1; border: 1px solid #cfd3e4; border-top: 0; padding: 2px 4px 0 5px; }
.modes { display: flex; gap: 2px; margin-left: -1px; height: 24px; }
.modes button { width: 19px; height: 19px; display: grid; place-items: center; }
.modes svg { width: 16px; height: 16px; }
.modes .on { background: #aabaf0; }
.panel-body h3 { font-size: 9px; line-height: 18px; color: #333; }
.row { display: grid; grid-template-columns: 69px minmax(0, 1fr); column-gap: 4px; height: 14px; align-items: center; color: #333; }
.row label { padding-left: 13px; line-height: 13px; border-bottom: 1px solid #dfe1e7; white-space: nowrap; }
.row.dim label { color: #777; }
.row input[type="text"] { width: 100%; height: 13px; border: 0; padding: 0 2px 1px; background: #fff; }
.row output { padding-left: 2px; }
.place { height: 12px; background: #e1e1e1; border: 1px solid #adadad; line-height: 9px; font-weight: 500; }
.combo { position: relative; height: 13px; }
.combo select { appearance: none; width: 100%; height: 13px; border: 0; padding: 0 2px; background: #fff; }
.combo svg { position: absolute; right: 0; top: 0; width: 13px; height: 13px; background: #e4e4e4; border: 1px solid #adadad; fill: none; stroke: #333; pointer-events: none; }
.file { display: flex; }
.file button { width: 14px; height: 13px; background: #e1e1e1; border: 1px solid #adadad; line-height: 6px; font-weight: 500; flex: none; }
input[type="checkbox"] { appearance: none; width: 9px; height: 9px; margin: 0; border: 1px solid #444; background: #fff; display: grid; place-items: center; flex: none; }
input[type="checkbox"]:checked::before { content: ""; width: 5px; height: 3px; border: solid #222; border-width: 0 0 1px 1px; rotate: -45deg; translate: 0 -1px; }

.osnap { display: flex; align-items: center; gap: 5px; height: 17px; padding: 1px 0 0 6px; border-top: 1px solid #dfe2ea; color: #777; }
.osnap label { display: flex; align-items: center; gap: 2px; }
.osnap input[type="checkbox"] { border-color: #ccc; }
.osnap input[type="checkbox"]:checked::before { border-color: #888; }
.osnap .filled input { background: #bfbfbf; width: 7px; height: 7px; }
.osnap .disable { color: #222; margin-left: 3px; }
.osnap .disable input { background: #7f99ac; border-color: #2d5f96; width: 8px; height: 8px; box-shadow: inset 0 0 0 1px #b5d4ee; }
.status { display: flex; height: 13px; border-top: 1px solid #cdd3e2; line-height: 12px; }
.status > * { border-right: 1px solid #cdd3e2; text-align: center; padding: 0 4px; }
.status .coord { width: 59px; padding: 0; }
.status .layer { width: 113px; display: flex; align-items: center; gap: 1px; padding: 0 2px; }
.layer i { width: 9px; height: 9px; background: #f01010; border: 1px solid #900; }
.status .tolerance { border: 0; padding: 0 1px; }
```
